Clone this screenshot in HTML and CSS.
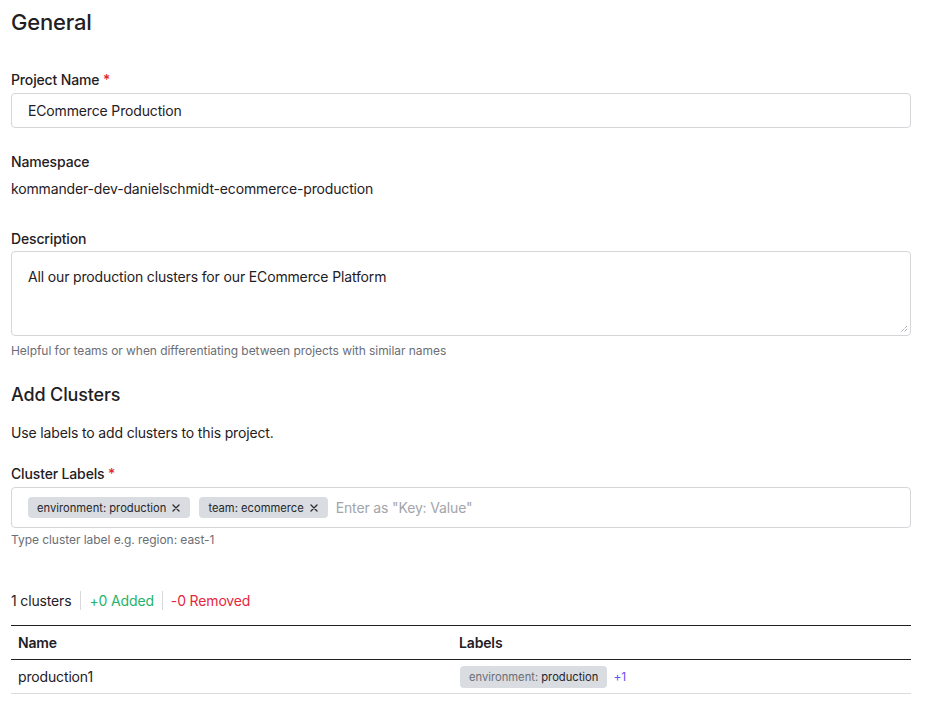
FILE: index.html
```html
<!DOCTYPE html>
<html lang="en">
<head>
<meta charset="utf-8">
<title>General</title>
<link rel="stylesheet" href="styles.css">
</head>
<body>
<main class="page">
  <h1 class="title">General</h1>

  <div class="field field-first">
    <label class="label">Project Name <span class="req">*</span></label>
    <div class="input">ECommerce Production</div>
  </div>

  <div class="field field-ns">
    <div class="label">Namespace</div>
    <div class="ns-value">kommander-dev-danielschmidt-ecommerce-production</div>
  </div>

  <div class="field field-desc">
    <label class="label">Description</label>
    <div class="textarea">All our production clusters for our ECommerce Platform
      <svg class="grip" width="8" height="8" viewBox="0 0 8 8"><path d="M7 1L1 7M7 4L4 7" stroke="#8a8a8a" stroke-width="1" stroke-dasharray="1 1"/></svg>
    </div>
    <div class="help">Helpful for teams or when differentiating between projects with similar names</div>
  </div>

  <h2 class="subtitle">Add Clusters</h2>
  <p class="intro">Use labels to add clusters to this project.</p>

  <div class="field field-labels">
    <label class="label">Cluster Labels <span class="req">*</span></label>
    <div class="tags">
      <span class="tag">environment: production
        <svg class="x" width="8" height="8" viewBox="0 0 8 8"><path d="M1 1L7 7M7 1L1 7" stroke="#2a2b2f" stroke-width="1.3" stroke-linecap="round"/></svg>
      </span>
      <span class="tag">team: ecommerce
        <svg class="x" width="8" height="8" viewBox="0 0 8 8"><path d="M1 1L7 7M7 1L1 7" stroke="#2a2b2f" stroke-width="1.3" stroke-linecap="round"/></svg>
      </span>
      <span class="placeholder">Enter as "Key: Value"</span>
    </div>
    <div class="help">Type cluster label e.g. region: east-1</div>
  </div>

  <div class="summary">
    <span class="sum-item">1 clusters</span>
    <span class="sum-item added">+0 Added</span>
    <span class="sum-item removed">-0 Removed</span>
  </div>

  <div class="table">
    <div class="row head">
      <div class="cell">Name</div>
      <div class="cell">Labels</div>
    </div>
    <div class="row body-row">
      <div class="cell">production1</div>
      <div class="cell labels-cell">
        <span class="label-chip"><span class="k">environment:</span> production</span>
        <span class="more">+1</span>
      </div>
    </div>
  </div>
</main>
</body>
</html>
```

FILE: styles.css
```css
* { box-sizing: border-box; }
html, body { margin: 0; padding: 0; background: #fff; }
body {
  font-family: Inter, "Noto Sans", "Liberation Sans", sans-serif;
  color: #1f2024;
  font-size: 14px;
  line-height: 20px;
  letter-spacing: -0.15px;
}
.page { padding: 8px 24px 20px 11px; }

.title {
  margin: 0;
  font-size: 22px;
  line-height: 28px;
  font-weight: 500;
  letter-spacing: -0.2px;
}
.subtitle {
  margin: 24px 0 0;
  font-size: 18px;
  line-height: 24px;
  font-weight: 500;
}
.intro { margin: 16px 0 0; }

.field-first { margin-top: 34px; }
.field-ns { margin-top: 24px; }
.field-desc { margin-top: 30px; }
.field-labels { margin-top: 21px; }

.label {
  display: block;
  font-weight: 500;
  margin-bottom: 3px;
}
.req { color: #e5262c; }

.input {
  height: 35px;
  border: 1px solid #d6d6da;
  border-radius: 4px;
  padding: 0 16px;
  display: flex;
  align-items: center;
}
.ns-value { margin-top: 7px; }

.textarea {
  position: relative;
  height: 85px;
  border: 1px solid #d6d6da;
  border-radius: 4px;
  padding: 15px 16px;
  margin-top: -1px;
}
.grip { position: absolute; right: 2px; bottom: 2px; }

.help {
  margin-top: 7px;
  font-size: 12px;
  line-height: 16px;
  color: #6b6e75;
  letter-spacing: -0.05px;
}
.field-labels .help { margin-top: 4px; }

.tags {
  height: 41px;
  border: 1px solid #d6d6da;
  border-radius: 4px;
  padding: 0 16px;
  display: flex;
  align-items: center;
  gap: 9px;
}
.tag {
  display: inline-flex;
  align-items: center;
  height: 21px;
  padding: 0 10px 0 9px;
  background: #d9dce1;
  border-radius: 4px;
  font-size: 11.2px;
  letter-spacing: 0;
  color: #26272b;
  gap: 6px;
}
.x { display: block; }
.placeholder { color: #a3a5aa; margin-left: -1px; }

.summary {
  margin-top: 43px;
  display: flex;
  align-items: center;
}
.sum-item {
  padding: 0 8px;
  border-left: 1px solid #d9d9dc;
  line-height: 19px;
}
.sum-item:first-child { padding-left: 0; padding-right: 9px; border-left: 0; }
.added { color: #1fb469; }
.removed { color: #e5273d; }

.table {
  margin-top: 15px;
  border-top: 1px solid #1f2024;
}
.row {
  display: grid;
  grid-template-columns: 441px 1fr;
  height: 34px;
  align-items: center;
}
.head { border-bottom: 1px solid #1f2024; font-weight: 600; }
.body-row { border-bottom: 1px solid #dcdcdf; }
.cell { padding-left: 7px; }
.labels-cell { display: flex; align-items: center; gap: 6px; padding-left: 8px; }
.label-chip {
  display: inline-flex;
  align-items: center;
  height: 22px;
  padding: 0 9px;
  background: #d9dce1;
  border-radius: 4px;
  font-size: 11.2px;
  letter-spacing: 0;
  color: #26272b;
  white-space: pre;
}
.label-chip .k { color: #6b6e75; }
.more { color: #6a4ff0; font-size: 12px; }
```
